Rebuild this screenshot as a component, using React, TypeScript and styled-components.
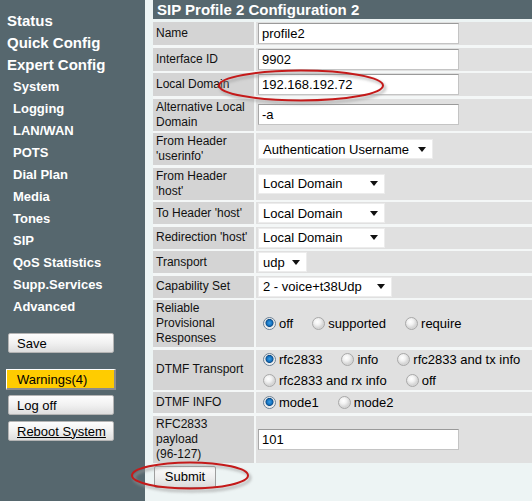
import React from "react";
import styled, { createGlobalStyle } from "styled-components";

const GlobalStyle = createGlobalStyle`
  html, body {
    margin: 0;
    padding: 0;
    background: #edf4f4;
  }
  body {
    font-family: "Liberation Sans", Arial, sans-serif;
  }
`;

const Page = styled.div`
  position: relative;
  display: flex;
  width: 532px;
  height: 501px;
  overflow: hidden;
  background: #edf4f4;
`;

const Sidebar = styled.nav`
  width: 145px;
  flex-shrink: 0;
  background: #56676e;
  padding-top: 10px;
  box-sizing: border-box;
  display: flex;
  flex-direction: column;
`;

const NavItem = styled.div<{ $main?: boolean }>`
  height: 22px;
  line-height: 22px;
  padding-left: ${(p) => (p.$main ? "7px" : "13px")};
  font-size: ${(p) => (p.$main ? "15px" : "13px")};
  font-weight: bold;
  color: #ffffff;
  white-space: nowrap;
`;

const ButtonStack = styled.div`
  margin-top: 15px;
  display: flex;
  flex-direction: column;
  align-items: flex-start;
`;

const SideButton = styled.button<{ $underline?: boolean }>`
  width: 106px;
  height: 20px;
  margin: 0 0 6px 8px;
  padding: 0 0 0 8px;
  text-align: left;
  font-family: "Liberation Sans", Arial, sans-serif;
  font-size: 13px;
  color: #000;
  background: linear-gradient(#fdfdfd, #f1f1f1 50%, #dedede);
  border: 1px solid #b4b4b4;
  border-radius: 2px;
  text-decoration: ${(p) => (p.$underline ? "underline" : "none")};
`;

const WarningButton = styled.button`
  width: 110px;
  height: 21px;
  margin: 10px 0 5px 6px;
  padding: 0 0 0 10px;
  text-align: left;
  font-family: "Liberation Sans", Arial, sans-serif;
  font-size: 13px;
  color: #000;
  background: #ffcc00;
  border-style: solid;
  border-width: 1px 2px 2px 1px;
  border-color: #ffffff #8c8c8c #8c8c8c #ffffff;
`;

const Main = styled.main`
  flex: 1;
  padding-left: 8px;
`;

const TitleBar = styled.div`
  height: 19px;
  line-height: 19px;
  padding-left: 4px;
  background: #56676e;
  color: #ffffff;
  font-size: 15px;
  font-weight: bold;
  white-space: nowrap;
`;

const FormGrid = styled.div`
  margin-top: 3px;
  display: grid;
  grid-template-columns: 101px 1fr;
  column-gap: 2px;
  row-gap: 2.5px;
  background: #f4f7f7;
`;

const LabelCell = styled.div`
  background: #d4d4d4;
  padding: 1px 3px;
  display: flex;
  align-items: center;
  font-size: 12px;
  line-height: 15px;
  color: #111;
`;

const ValueCell = styled.div`
  background: #e0e0e0;
  padding: 1px 2px;
  display: flex;
  align-items: center;
  min-height: 19px;
`;

const TextInput = styled.input`
  width: 201px;
  height: 21px;
  box-sizing: border-box;
  padding: 0 3px;
  border: 1px solid #c4c4c4;
  border-top-color: #9a9a9a;
  border-left-color: #a8a8a8;
  background: #fff;
  font-family: "Liberation Sans", Arial, sans-serif;
  font-size: 13px;
  color: #000;
  outline: none;
`;

const SelectBox = styled.div<{ $w: number }>`
  width: ${(p) => p.$w}px;
  height: 20px;
  box-sizing: border-box;
  display: flex;
  align-items: center;
  justify-content: space-between;
  padding: 0 6px 0 4px;
  background: #fff;
  border: 1px solid #ececec;
  font-size: 13px;
  color: #000;
  white-space: nowrap;
`;

const Arrow = styled.svg`
  width: 8px;
  height: 5px;
  flex-shrink: 0;
`;

const RadioGroup = styled.div`
  display: flex;
  flex-wrap: wrap;
  column-gap: 19px;
  row-gap: 6px;
  padding: 1px 0 1px 5px;
`;

const RadioOption = styled.label`
  display: inline-flex;
  align-items: center;
  gap: 3px;
  font-size: 13px;
  color: #000;
  white-space: nowrap;
  height: 15px;
`;

const RadioDot = styled.span<{ $on?: boolean }>`
  width: 13px;
  height: 13px;
  box-sizing: border-box;
  border-radius: 50%;
  border: 1px solid ${(p) => (p.$on ? "#6d8194" : "#a9a9a9")};
  background: ${(p) =>
    p.$on
      ? "radial-gradient(circle at 50% 45%, #3aa0e8 0, #1673c0 2.5px, #0b4d8a 3.6px, #e4e4e4 4.4px, #fafafa 6px)"
      : "radial-gradient(circle at 40% 35%, #ffffff 0, #f2f2f2 3px, #d6d6d6 6px)"};
`;

const SubmitButton = styled.button`
  margin: 3px 0 0 1px;
  width: 62px;
  height: 22px;
  font-family: "Liberation Sans", Arial, sans-serif;
  font-size: 13px;
  color: #000;
  background: linear-gradient(#fbfbfb, #efefef 50%, #dcdcdc);
  border: 1px solid #9e9e9e;
  border-radius: 2px;
`;

const Annotations = styled.svg`
  position: absolute;
  left: 0;
  top: 0;
  width: 532px;
  height: 501px;
  pointer-events: none;
`;

function Select({ value, width }: { value: string; width: number }) {
  return (
    <SelectBox $w={width}>
      <span>{value}</span>
      <Arrow viewBox="0 0 8 5">
        <path d="M0 0 H8 L4 5 Z" fill="#111" />
      </Arrow>
    </SelectBox>
  );
}

function Radio({ label, on }: { label: string; on?: boolean }) {
  return (
    <RadioOption>
      <RadioDot $on={on} />
      {label}
    </RadioOption>
  );
}

const mainNav = ["Status", "Quick Config", "Expert Config"];
const subNav = [
  "System",
  "Logging",
  "LAN/WAN",
  "POTS",
  "Dial Plan",
  "Media",
  "Tones",
  "SIP",
  "QoS Statistics",
  "Supp.Services",
  "Advanced",
];

export default function App() {
  return (
    <Page>
      <GlobalStyle />
      <Sidebar>
        {mainNav.map((n) => (
          <NavItem key={n} $main>
            {n}
          </NavItem>
        ))}
        {subNav.map((n) => (
          <NavItem key={n}>{n}</NavItem>
        ))}
        <ButtonStack>
          <SideButton>Save</SideButton>
          <WarningButton>Warnings(4)</WarningButton>
          <SideButton>Log off</SideButton>
          <SideButton $underline>Reboot System</SideButton>
        </ButtonStack>
      </Sidebar>

      <Main>
        <TitleBar>SIP Profile 2 Configuration 2</TitleBar>
        <FormGrid>
          <LabelCell>Name</LabelCell>
          <ValueCell>
            <TextInput defaultValue="profile2" />
          </ValueCell>

          <LabelCell>Interface ID</LabelCell>
          <ValueCell>
            <TextInput defaultValue="9902" />
          </ValueCell>

          <LabelCell>Local Domain</LabelCell>
          <ValueCell>
            <TextInput defaultValue="192.168.192.72" />
          </ValueCell>

          <LabelCell>Alternative Local Domain</LabelCell>
          <ValueCell>
            <TextInput defaultValue="-a" />
          </ValueCell>

          <LabelCell>From Header 'userinfo'</LabelCell>
          <ValueCell>
            <Select value="Authentication Username" width={175} />
          </ValueCell>

          <LabelCell>From Header 'host'</LabelCell>
          <ValueCell>
            <Select value="Local Domain" width={127} />
          </ValueCell>

          <LabelCell>To Header 'host'</LabelCell>
          <ValueCell>
            <Select value="Local Domain" width={127} />
          </ValueCell>

          <LabelCell>Redirection 'host'</LabelCell>
          <ValueCell>
            <Select value="Local Domain" width={127} />
          </ValueCell>

          <LabelCell>Transport</LabelCell>
          <ValueCell>
            <Select value="udp" width={49} />
          </ValueCell>

          <LabelCell>Capability Set</LabelCell>
          <ValueCell>
            <Select value="2 - voice+t38Udp" width={134} />
          </ValueCell>

          <LabelCell>Reliable Provisional Responses</LabelCell>
          <ValueCell>
            <RadioGroup>
              <Radio label="off" on />
              <Radio label="supported" />
              <Radio label="require" />
            </RadioGroup>
          </ValueCell>

          <LabelCell>DTMF Transport</LabelCell>
          <ValueCell>
            <RadioGroup>
              <Radio label="rfc2833" on />
              <Radio label="info" />
              <Radio label="rfc2833 and tx info" />
              <Radio label="rfc2833 and rx info" />
              <Radio label="off" />
            </RadioGroup>
          </ValueCell>

          <LabelCell>DTMF INFO</LabelCell>
          <ValueCell>
            <RadioGroup>
              <Radio label="mode1" on />
              <Radio label="mode2" />
            </RadioGroup>
          </ValueCell>

          <LabelCell>
            RFC2833
            <br />
            payload
            <br />
            (96-127)
          </LabelCell>
          <ValueCell>
            <TextInput defaultValue="101" />
          </ValueCell>
        </FormGrid>
        <SubmitButton>Submit</SubmitButton>
      </Main>

      <Annotations viewBox="0 0 532 501">
        <defs>
          <filter id="soft" x="-20%" y="-50%" width="140%" height="200%">
            <feGaussianBlur stdDeviation="1.5" />
          </filter>
        </defs>
        <ellipse cx="303" cy="88" rx="82" ry="15" fill="none" stroke="#9a9a9a" strokeWidth="2.5" filter="url(#soft)" opacity="0.7" />
        <ellipse cx="301" cy="85.5" rx="82" ry="15" fill="none" stroke="#c41a1a" strokeWidth="2" />
        <ellipse cx="192" cy="478" rx="58" ry="13" fill="none" stroke="#9a9a9a" strokeWidth="2.5" filter="url(#soft)" opacity="0.7" />
        <ellipse cx="190" cy="475.5" rx="58" ry="13" fill="none" stroke="#c41a1a" strokeWidth="2" />
      </Annotations>
    </Page>
  );
}
